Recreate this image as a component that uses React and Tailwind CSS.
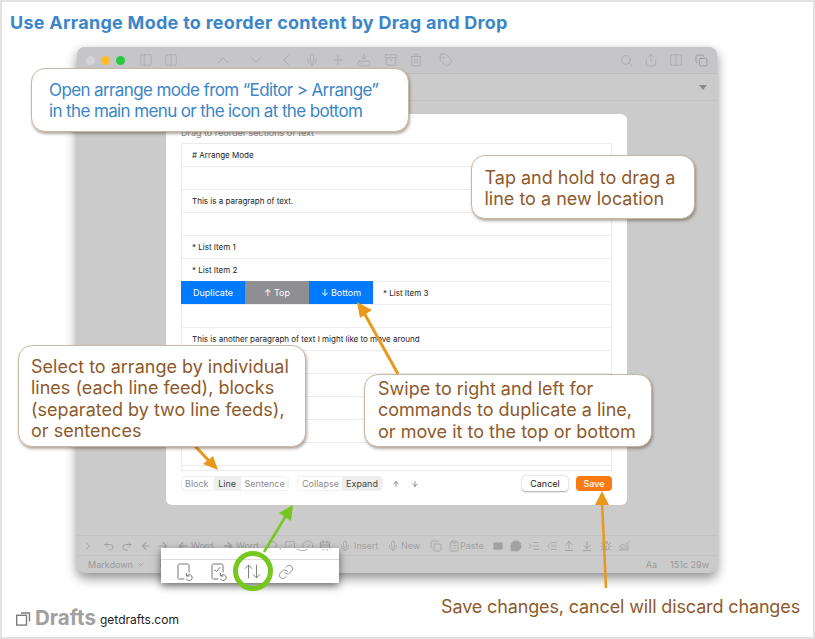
import {
  PanelLeft, Columns2, ChevronUp, ChevronDown, ChevronLeft, ChevronRight, Mic, Plus, HardDriveDownload, Archive, Trash2, Tag,
  Search, Share, Copy, Undo2, Redo2, ArrowLeft, ArrowRight, ArrowUp, ArrowDown, SquareCheck, CircleCheck, CalendarDays, ClipboardList,
  Mail, MessageCircle, IndentIncrease, IndentDecrease, ArrowUpFromLine, ArrowDownToLine, Bug, ChartNoAxesCombined, Pin, ArrowUpDown, Link,
} from 'lucide-react'

const rows = [
  '# Arrange Mode', '', 'This is a paragraph of text.', '', '* List Item 1', '* List Item 2', null, '',
  'This is another paragraph of text I might like to move around', '', '', '', '', '',
]

const Word = ({ className, children }) => (
  <span className={`shrink-0 text-[9px] leading-none ${className}`}>{children}</span>
)

const Callout = ({ className, children }) => (
  <div className={`absolute whitespace-nowrap rounded-[14px] border border-[#c9b6a5] bg-white leading-[21.3px] shadow-[1px_2px_3px_rgba(60,40,20,0.4)] ${className}`}>
    {children}
  </div>
)

const DocIcon = ({ check }) => (
  <svg width="18" height="20" viewBox="0 0 18 20" fill="none" stroke="#777" strokeWidth="1" strokeLinecap="round">
    <path d="M8 17H3.500A1.500 1.500 0 0 1 2 15.500V3.500A1.500 1.500 0 0 1 3.500 2H11.500A1.500 1.500 0 0 1 13 3.500V10" />
    {check && <path d="M5 8l1.500 1.500L10 5.500" />}
    <path d="M11 13.500a3 3 0 1 1 -0.500 3.500" />
    <path d="M10.500 11.500v2.500h2.500" />
  </svg>
)

export default function App() {
  return (
    <div className="relative flex h-[639px] w-[815px] flex-col overflow-hidden border-2 border-[#e2e2e2] bg-white [font-family:Inter,sans-serif]">
      <h1 className="h-[45px] whitespace-nowrap pl-[8px] pt-[9px] text-[18px] font-bold leading-[24px] tracking-[0.28px] text-[#3a86c8]">
        Use Arrange Mode to reorder content by Drag and Drop
      </h1>

      {/* dimmed app window */}
      <div className="ml-[75px] flex h-[526px] w-[640px] shrink-0 flex-col rounded-[8px] bg-[#cbcbcb] shadow-[0_5px_12px_rgba(0,0,0,0.45)]">
        <div className="flex h-[27px] shrink-0 items-center rounded-t-[8px] border-b border-[#bdbdbf] bg-[#c6c6c8] pl-[9px] text-[#a6a6a8]">
          <span className="size-[9px] shrink-0 rounded-full bg-[#d4d4d6]" />
          <span className="ml-[6px] size-[9px] shrink-0 rounded-full bg-[#fdbc2e]" />
          <span className="ml-[6px] size-[9px] shrink-0 rounded-full bg-[#28c83f]" />
          <PanelLeft size={14} strokeWidth={1.2} className="ml-[14px] shrink-0" />
          <Columns2 size={14} strokeWidth={1.2} className="ml-[11px] shrink-0" />
          <ChevronUp size={18} strokeWidth={1.3} className="ml-[36px] shrink-0" />
          <ChevronDown size={18} strokeWidth={1.3} className="ml-[15px] shrink-0" />
          <ChevronLeft size={18} strokeWidth={1.3} className="ml-[12px] shrink-0" />
          <Mic size={14} strokeWidth={1.3} className="ml-[10px] shrink-0" />
          <Plus size={16} strokeWidth={1.3} className="ml-[11px] shrink-0" />
          <HardDriveDownload size={14} strokeWidth={1.3} className="ml-[11px] shrink-0" />
          <Archive size={14} strokeWidth={1.3} className="ml-[13px] shrink-0" />
          <Trash2 size={14} strokeWidth={1.3} className="ml-[11px] shrink-0" />
          <Tag size={14} strokeWidth={1.3} className="ml-[16px] shrink-0" />
          <Search size={13} strokeWidth={1.5} className="ml-[167px] shrink-0" />
          <Share size={14} strokeWidth={1.3} className="ml-[11px] shrink-0" />
          <Columns2 size={14} strokeWidth={1.2} className="ml-[11px] shrink-0" />
          <Copy size={13} strokeWidth={1.5} className="ml-[12px] shrink-0 text-[#949496]" />
        </div>
        <div className="flex h-[27px] shrink-0 items-center justify-end border-b border-[#c3c3c3] pr-[10px]">
          <span className="h-0 w-0 border-x-[4px] border-t-[5px] border-x-transparent border-t-[#8a8a8a]" />
        </div>

        <div className="h-[434px] shrink-0 pl-[89px] pt-[13px]">
          <div className="flex h-[391px] w-[461px] flex-col rounded-[6px] bg-white pl-[15px]">
            <div className="h-[29px] pt-[13px] text-[9px] leading-[11px] text-[#8b8b8b]">Drag to reorder sections of text</div>
            <div className="h-[328px] w-[431px] shrink-0 border border-[#ececec]">
              {rows.map((text, i) =>
                text === null ? (
                  <div key={i} className="flex h-[23px] items-center border-b border-[#ececec]">
                    <span className="-ml-px -mt-px flex h-[23px] w-[64px] items-center justify-center bg-[#007aff] text-[9px] text-white">Duplicate</span>
                    <span className="-mt-px flex h-[23px] w-[64px] items-center justify-center bg-[#8e8e93] text-[9px] text-white">↑ Top</span>
                    <span className="-mt-px flex h-[23px] w-[64px] items-center justify-center bg-[#007aff] text-[9px] text-white">↓ Bottom</span>
                    <span className="ml-[10px] text-[8px] text-[#222]">* List Item 3</span>
                  </div>
                ) : (
                  <div key={i} className="flex h-[23px] items-center border-b border-[#ececec] pl-[10px] text-[8px] text-[#222]">
                    {text}
                  </div>
                ),
              )}
            </div>
            <div className="mt-[5px] flex h-[15px] w-[431px] items-center text-[9px] text-[#8e8e8e]">
              <div className="flex h-[15px] w-[108px] items-center rounded-[4px] border border-[#f0f0f0]">
                <span className="pl-[3px]">Block</span>
                <span className="ml-[5px] flex h-full w-[27px] items-center justify-center bg-[#eeeeee] text-[#444]">Line</span>
                <span className="ml-[4px]">Sentence</span>
              </div>
              <div className="ml-[8px] flex h-[15px] w-[86px] items-center rounded-[4px] border border-[#f0f0f0]">
                <span className="pl-[4px]">Collapse</span>
                <span className="ml-auto flex h-full w-[40px] items-center justify-center rounded-r-[4px] bg-[#eeeeee] text-[#444]">Expand</span>
              </div>
              <ArrowUp size={8} strokeWidth={2} className="ml-[9px] shrink-0 text-[#555]" />
              <ArrowDown size={8} strokeWidth={2} className="ml-[11px] shrink-0 text-[#555]" />
              <button className="ml-auto flex h-[15px] w-[46px] items-center justify-center rounded-[4px] bg-white text-[#222] shadow-[0_0.5px_2px_rgba(0,0,0,0.35)]">Cancel</button>
              <button className="ml-[8px] flex h-[15px] w-[36px] items-center justify-center rounded-[4px] bg-[#fb7a12] font-medium text-white">Save</button>
            </div>
          </div>
        </div>

        <div className="flex h-[20px] shrink-0 items-center border-t border-[#c3c3c3] text-[#a2a2a2]">
          <ChevronRight size={12} strokeWidth={2} className="ml-[5px] shrink-0" />
          <Undo2 size={12} strokeWidth={2} className="ml-[9px] shrink-0" />
          <Redo2 size={12} strokeWidth={2} className="ml-[6px] shrink-0" />
          <ArrowLeft size={12} strokeWidth={2.4} className="ml-[7px] shrink-0" />
          <ArrowRight size={12} strokeWidth={2.4} className="ml-[5px] shrink-0" />
          <ArrowLeft size={12} strokeWidth={2.8} className="ml-[8px] shrink-0" />
          <Word className="ml-[2px] w-[20px]">Word</Word>
          <ArrowRight size={12} strokeWidth={2.8} className="ml-[11px] shrink-0" />
          <Word className="ml-[2px] w-[20px]">Word</Word>
          <Search size={12} strokeWidth={2} className="ml-[11px] shrink-0" />
          <SquareCheck size={12} strokeWidth={1.5} className="ml-[5px] shrink-0" />
          <CircleCheck size={12} strokeWidth={1.5} className="ml-[6px] shrink-0" />
          <CalendarDays size={12} strokeWidth={2.4} className="ml-[5px] shrink-0" />
          <Mic size={12} strokeWidth={1.5} className="ml-[8px] shrink-0" />
          <Word className="ml-[3px] w-[21px]">Insert</Word>
          <Mic size={12} strokeWidth={1.5} className="ml-[12px] shrink-0" />
          <Word className="ml-[2px] w-[19px]">New</Word>
          <Copy size={12} strokeWidth={1.5} className="ml-[10px] shrink-0" />
          <ClipboardList size={12} strokeWidth={1.5} className="ml-[6px] shrink-0" />
          <Word className="w-[21px]">Paste</Word>
          <Mail size={12} fill="currentColor" stroke="#cbcbcb" strokeWidth={1.5} className="ml-[11px] shrink-0" />
          <MessageCircle size={12} fill="currentColor" className="ml-[6px] shrink-0" />
          <IndentIncrease size={12} strokeWidth={1.5} className="ml-[6px] shrink-0" />
          <IndentDecrease size={12} strokeWidth={1.5} className="ml-[6px] shrink-0" />
          <ArrowUpFromLine size={12} strokeWidth={2} className="ml-[5px] shrink-0" />
          <ArrowDownToLine size={12} strokeWidth={2} className="ml-[6px] shrink-0" />
          <Bug size={12} strokeWidth={1.5} className="ml-[7px] shrink-0" />
          <ChartNoAxesCombined size={12} strokeWidth={2} className="ml-[6px] shrink-0" />
        </div>
        <div className="flex h-[18px] shrink-0 items-center border-t border-[#c3c3c3] pl-[11px] pr-[8px] text-[9px] text-[#999]">
          <span>Markdown</span>
          <ChevronDown size={9} strokeWidth={2} className="ml-[3px] shrink-0" />
          <Pin size={11} fill="currentColor" className="ml-[13px] shrink-0" />
          <span className="ml-auto">Aa</span>
          <span className="ml-[13px]">151c 29w</span>
        </div>
      </div>

      <div className="flex items-start justify-between">
        <div className="ml-[14px] mt-[33px] flex items-center">
          <svg width="15" height="15" viewBox="0 0 15 15" fill="none" stroke="#7d7d7d" strokeWidth="1.4">
            <rect x="0.7" y="4.300" width="9.800" height="9.800" />
            <path d="M5 2H13.500V10.500" />
          </svg>
          <span className="ml-[4px] text-[20.5px] font-bold leading-[24px] text-[#a0a0a0]">Drafts</span>
          <span className="ml-[4px] mt-[3px] text-[12px] leading-[16px] text-[#222]">getdrafts.com</span>
        </div>
        <div className="mr-[13px] mt-[23px] whitespace-nowrap text-[18px] leading-[22px] tracking-[-0.14px] text-[#8e5a2b]">Save changes, cancel will discard changes</div>
      </div>

      {/* markdown popover from the toolbar */}
      <div className="absolute left-[159px] top-[546px] h-[35px] w-[178px] bg-white shadow-[0_3px_8px_rgba(0,0,0,0.55)]">
        <svg className="block h-[12px] w-[178px] border-b border-[#dcdcdc]" viewBox="0 0 178 12" fill="none" stroke="#aaa" strokeWidth="1">
          <path d="M122 0v2M140 1q6 4 12 0M168 2h2M172 2h2M176 1h1" />
        </svg>
        <div className="flex h-[23px] items-center pl-[15px]">
          <DocIcon />
          <span className="ml-[16px] flex"><DocIcon check /></span>
          <ArrowUpDown size={19} strokeWidth={1.2} className="ml-[15px] shrink-0 text-[#777]" />
          <Link size={16} strokeWidth={1.2} className="ml-[16px] shrink-0 text-[#777]" />
        </div>
      </div>

      {/* annotation arrows */}
      <svg className="pointer-events-none absolute left-[-2px] top-[-2px]" width="815" height="639" viewBox="0 0 815 639" fill="none">
        <path d="M398 374L363 311" stroke="#e8991c" strokeWidth="3" />
        <path d="M357 302L372 310L360 318Z" fill="#e8991c" />
        <path d="M195 446L210 462" stroke="#e8991c" strokeWidth="3" />
        <path d="M218 470L203 464L213 456Z" fill="#e8991c" />
        <path d="M606 588L602 502" stroke="#e8991c" strokeWidth="2.500" />
        <path d="M602 491L609 505L595 505Z" fill="#e8991c" />
        <path d="M264 552L287 514" stroke="#76c81f" strokeWidth="2.500" />
        <path d="M293 505L291 521L279 513Z" fill="#76c81f" />
        <circle cx="253" cy="571" r="17.500" stroke="#76c81f" strokeWidth="5" />
      </svg>

      <Callout className="left-[29px] top-[66px] h-[64px] w-[378px] pl-[17px] pt-[11px] text-[17px] tracking-[-0.62px] text-[#3a86c8]">
        Open arrange mode from “Editor &gt; Arrange”
        <br />
        in the main menu or the icon at the bottom
      </Callout>
      <Callout className="left-[469px] top-[153px] h-[64px] w-[224px] pl-[12.5px] pt-[11px] text-[18px] text-[#8e5a2b]">
        Tap and hold to drag a
        <br />
        line to a new location
      </Callout>
      <Callout className="left-[16px] top-[343px] h-[102px] w-[288px] pl-[12px] pt-[10px] text-[18px] text-[#8e5a2b]">
        Select to arrange by individual
        <br />
        lines (each line feed), blocks
        <br />
        (separated by two line feeds),
        <br />
        or sentences
      </Callout>
      <Callout className="left-[362px] top-[372px] h-[73px] w-[288px] pl-[13px] pt-[3px] text-[18px] text-[#8e5a2b]">
        Swipe to right and left for
        <br />
        commands to duplicate a line,
        <br />
        or move it to the top or bottom
      </Callout>
    </div>
  )
}
